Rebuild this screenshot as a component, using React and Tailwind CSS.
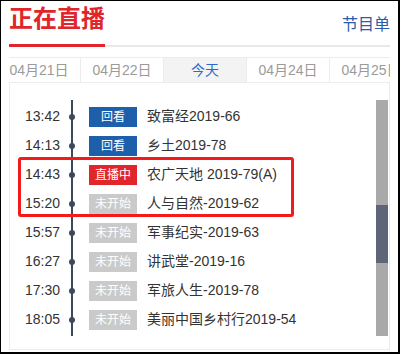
import React from "react";

const font = { fontFamily: '"Liberation Sans", "Noto Sans CJK SC", sans-serif' };

const tabs = [
  { label: "04月21日" },
  { label: "04月22日" },
  { label: "今天", active: true },
  { label: "04月24日" },
  { label: "04月25日" },
];

const rows = [
  { time: "13:42", status: "回看", title: "致富经2019-66" },
  { time: "14:13", status: "回看", title: "乡土2019-78" },
  { time: "14:43", status: "直播中", title: "农广天地 2019-79(A)" },
  { time: "15:20", status: "未开始", title: "人与自然-2019-62" },
  { time: "15:57", status: "未开始", title: "军事纪实-2019-63" },
  { time: "16:27", status: "未开始", title: "讲武堂-2019-16" },
  { time: "17:30", status: "未开始", title: "军旅人生-2019-78" },
  { time: "18:05", status: "未开始", title: "美丽中国乡村行2019-54" },
];

function Badge({ status }) {
  if (status === "回看")
    return (
      <div className="w-[48px] h-[20px] flex items-center justify-center bg-[#1d5fab] text-white text-[12px]">
        回看
      </div>
    );
  if (status === "直播中")
    return (
      <div className="w-[48px] h-[20px] flex items-center justify-center bg-[#e1262b] text-white text-[12px]">
        直播中
      </div>
    );
  return (
    <div className="w-[48px] h-[20px] flex items-center justify-center bg-[#cacaca] text-white text-[12px]">
      未开始
    </div>
  );
}

export default function App() {
  return (
    <div
      className="w-[400px] h-[354px] bg-white border-l border-t border-r-2 border-b-2 border-black overflow-hidden"
      style={font}
    >
      {/* header */}
      <div className="mx-[8px] h-[46px] flex justify-between items-start border-b-2 border-[#e9e9e9]">
        <div className="h-[46px] w-[96px] shrink-0 border-b-[3px] border-[#e1262b]">
          <div className="mt-[4px] leading-[28px] text-[24px] font-bold text-[#e1262b] tracking-[0px]">
            正在直播
          </div>
        </div>
        <div className="mt-[13px] leading-[22px] text-[16px] text-[#2a5cab]">节目单</div>
      </div>

      {/* tabs */}
      <div className="mt-[10px] mx-[8px] h-[26px] flex overflow-hidden border-y border-[#ececec]">
        <div className="flex shrink-0 -ml-[11px]">
          {tabs.map((t) => (
            <div
              key={t.label}
              className={
                t.active
                  ? "w-[83px] shrink-0 flex items-center justify-center border-r border-[#ececec] bg-[#f3f3f3] text-[#2a6acb] text-[14px]"
                  : "w-[83px] shrink-0 flex items-center justify-center border-r border-[#ececec] text-[#9a9a9a] text-[14px]"
              }
            >
              {t.label}
            </div>
          ))}
        </div>
      </div>

      {/* list */}
      <div className="mx-[8px] h-[267px] flex border-x border-b border-[#ececec]">
        <div className="flex-1 relative pt-[17px]">
          <div className="flex">
            {/* times */}
            <div className="w-[61px] pl-[15px] pt-[2px] flex flex-col">
              {rows.map((r) => (
                <div key={r.time} className="h-[29px] flex items-center text-[14px] text-[#333]">
                  {r.time}
                </div>
              ))}
            </div>
            {/* line */}
            <div className="w-[2px] bg-[#3c4a5c] py-[2px] flex flex-col">
              {rows.map((r) => (
                <div key={r.time} className="h-[29px] flex items-center">
                  <div className="w-[6px] h-[6px] -ml-[2px] rounded-full bg-[#3c4a5c] shrink-0" />
                </div>
              ))}
            </div>
            {/* content */}
            <div className="pl-[16px] pt-[2px] flex flex-col">
              {rows.map((r) => (
                <div key={r.time} className="h-[29px] flex items-center">
                  <Badge status={r.status} />
                  <div className="ml-[10px] text-[14px] text-[#333] whitespace-nowrap">{r.title}</div>
                </div>
              ))}
            </div>
          </div>
          {/* highlight annotation */}
          <div className="absolute left-[8px] top-[74px] w-[276px] h-[60px] border-[3px] border-[#f51a1a] rounded-[3px]" />
        </div>
        {/* scrollbar */}
        <div className="w-[12px] mr-[1px] mt-[17px] h-[236px] bg-[#a9a9a9] flex flex-col">
          <div className="h-[105px]" />
          <div className="h-[58px] bg-[#5e6578]" />
        </div>
      </div>
    </div>
  );
}
